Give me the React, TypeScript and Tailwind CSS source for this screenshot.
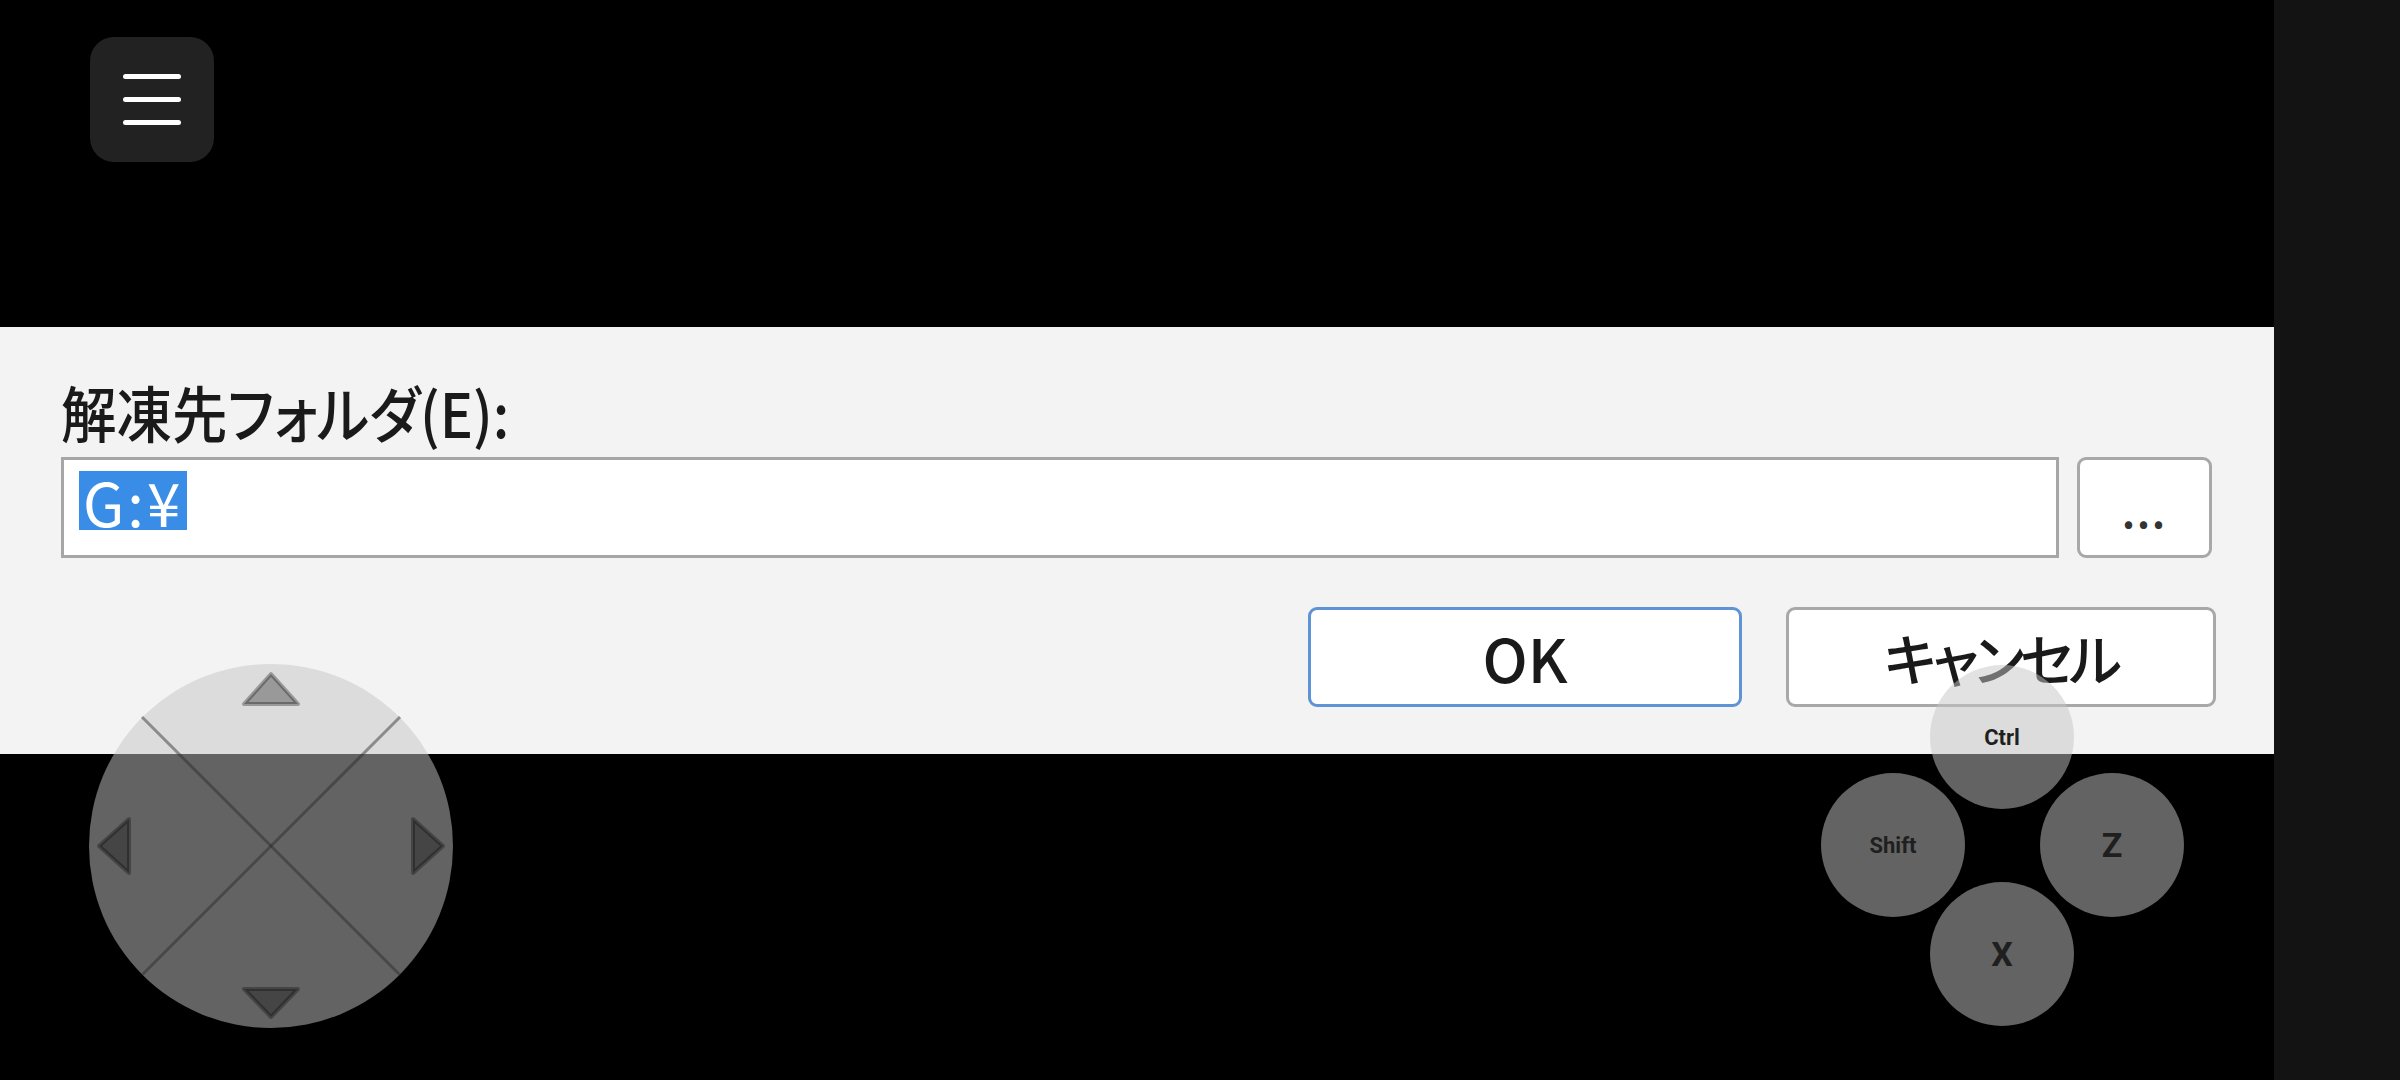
import React from 'react';

// 画面上のゲームパッド風オーバーレイ + 解凍先ダイアログ
const jp = "font-['Noto_Sans_CJK_JP',sans-serif]";

const MenuButton: React.FC = () => (
  <button className="flex h-[125px] w-[124px] flex-col items-center justify-center gap-[18px] rounded-[24px] bg-[#222222]">
    <span className="h-[5px] w-[58px] rounded-full bg-white" />
    <span className="h-[5px] w-[58px] rounded-full bg-white" />
    <span className="h-[5px] w-[58px] rounded-full bg-white" />
  </button>
);

const DPad: React.FC = () => (
  <div className="absolute left-[89px] top-[664px] h-[364px] w-[364px] rounded-full bg-[rgba(197,197,197,0.5)]">
    <svg viewBox="0 0 364 364" className="h-full w-full">
      <line x1="53" y1="53" x2="311" y2="311" stroke="rgba(40,40,40,0.45)" strokeWidth="3" />
      <line x1="311" y1="53" x2="53" y2="311" stroke="rgba(40,40,40,0.45)" strokeWidth="3" />
      <g fill="rgba(0,0,0,0.3)" stroke="rgba(0,0,0,0.3)" strokeWidth="4" strokeLinejoin="round">
        <polygon points="182,10 155,40 209,40" />
        <polygon points="155,325 209,325 182,353" />
        <polygon points="10,182 40,155 40,209" />
        <polygon points="354,182 324,155 324,209" />
      </g>
    </svg>
  </div>
);

interface KeyProps {
  label: string;
  pos: string;
  big?: boolean;
}

const KeyButton: React.FC<KeyProps> = ({ label, pos, big }) => (
  <div
    className={`absolute flex h-[144px] w-[144px] items-center justify-center rounded-full bg-[rgba(197,197,197,0.5)] font-['Roboto',sans-serif] font-bold text-[#1f1f1f] ${pos} ${big ? 'text-[34px]' : 'text-[22px]'}`}
  >
    {label}
  </div>
);

const App: React.FC = () => {
  return (
    <div className="flex h-[1080px] w-[2400px] overflow-hidden bg-black">
      <div className="relative flex w-[2274px] flex-col">
        <div className="h-[327px] pl-[90px] pt-[37px]">
          <MenuButton />
        </div>

        {/* ダイアログ部分 */}
        <div className={`flex h-[427px] flex-col bg-[#f3f3f3] pl-[61px] pr-[62px] pt-[55px] font-medium text-[#1a1a1a] ${jp}`}>
          <div className="h-[60px] origin-left scale-x-[0.91] text-[61px] leading-[60px] [font-feature-settings:'palt']">解凍先フォルダ(E):</div>
          <div className="mt-[15px] flex h-[101px] gap-[18px]">
            <div className="flex flex-1 items-start border-[3px] border-[#a6a6a6] bg-white pl-[15px] pt-[11px]">
              <span className="inline-block h-[59px] bg-[#3a8de6] px-[4px] text-[60px] font-normal leading-[59px] tracking-[3px] text-white">G:¥</span>
            </div>
            <button className="flex w-[135px] items-center justify-center rounded-[9px] border-[3px] border-[#a8a8a8] bg-white pt-[6px] text-[40px] font-bold tracking-[2px] text-[#333]">
              ...
            </button>
          </div>
          <div className="mr-[-4px] mt-[49px] flex justify-end gap-[44px]">
            <button className="flex h-[100px] w-[434px] items-center justify-center rounded-[9px] border-[3px] border-[#5e94d6] bg-white text-[60px]">
              OK
            </button>
            <button className="flex h-[100px] w-[430px] items-center justify-center rounded-[9px] border-[3px] border-[#a8a8a8] bg-white text-[56px] tracking-[-4px] [font-feature-settings:'palt']">
              キャンセル
            </button>
          </div>
        </div>

        <div className="flex-1" />

        <DPad />
        <KeyButton label="Ctrl" pos="left-[1930px] top-[665px]" />
        <KeyButton label="Shift" pos="left-[1821px] top-[773px]" />
        <KeyButton label="Z" pos="left-[2040px] top-[773px]" big />
        <KeyButton label="X" pos="left-[1930px] top-[882px]" big />
      </div>
      <div className="flex-1 bg-[#131313]" />
    </div>
  );
};

export default App;
